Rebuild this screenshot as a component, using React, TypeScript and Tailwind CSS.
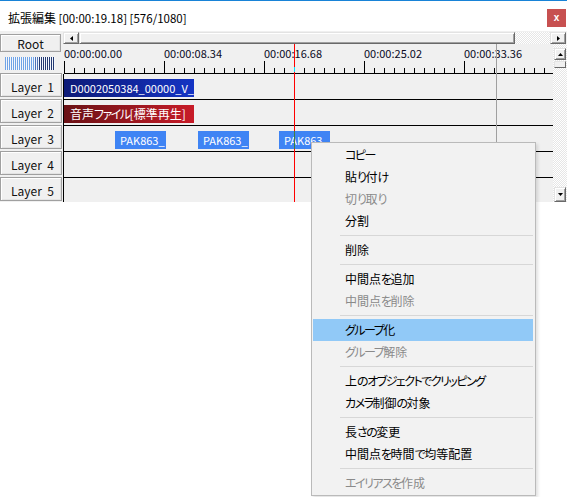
import React from "react";

type Item = { t?: string; d?: boolean; h?: boolean; sep?: boolean };

const MENU: Item[] = [
  { t: "コピー" },
  { t: "貼り付け" },
  { t: "切り取り", d: true },
  { t: "分割" },
  { sep: true },
  { t: "削除" },
  { sep: true },
  { t: "中間点を追加" },
  { t: "中間点を削除", d: true },
  { sep: true },
  { t: "グループ化", h: true },
  { t: "グループ解除", d: true },
  { sep: true },
  { t: "上のオブジェクトでクリッピング" },
  { t: "カメラ制御の対象" },
  { sep: true },
  { t: "長さの変更" },
  { t: "中間点を時間で均等配置" },
  { sep: true },
  { t: "エイリアスを作成", d: true },
];

const LABELS = ["00:00:00.00", "00:00:08.34", "00:00:16.68", "00:00:25.02", "00:00:33.36"];

function Kana({ text }: { text: string }) {
  const parts = text.match(/[\u3040-\u30ff]+|[^\u3040-\u30ff]+/g) || [];
  return (
    <>
      {parts.map((p, i) =>
        /[\u3040-\u30ff]/.test(p) ? (
          <span key={i} className="tracking-[-1.5px]">
            {p}
          </span>
        ) : (
          <span key={i}>{p}</span>
        )
      )}
    </>
  );
}

function ArrowBtn({ dir, className }: { dir: "l" | "r" | "u" | "d"; className: string }) {
  return (
    <div
      className={
        "flex items-center justify-center bg-[#f0f0f0] border border-t-[#e3e3e3] border-l-[#e3e3e3] border-r-[#696969] border-b-[#696969] shadow-[inset_1px_1px_0_#ffffff,inset_-1px_-1px_0_#a0a0a0] " +
        className
      }
    >
      {dir === "l" && (
        <svg width="3" height="5" viewBox="0 0 3 5">
          <polygon points="3,0 3,5 0,2.5" fill="#000" />
        </svg>
      )}
      {dir === "r" && (
        <svg width="3" height="5" viewBox="0 0 3 5">
          <polygon points="0,0 0,5 3,2.5" fill="#000" />
        </svg>
      )}
      {dir === "u" && (
        <svg width="5" height="3" viewBox="0 0 5 3">
          <polygon points="0,3 5,3 2.5,0" fill="#000" />
        </svg>
      )}
      {dir === "d" && (
        <svg width="5" height="3" viewBox="0 0 5 3">
          <polygon points="0,0 5,0 2.5,3" fill="#000" />
        </svg>
      )}
    </div>
  );
}

export default function App() {
  const minor: number[] = [];
  for (let x = 0; x < 489; x += 10) minor.push(x);
  const stripes = Array.from({ length: 25 }, (_, i) => i);

  return (
    <div className="relative w-[567px] h-[497px] overflow-hidden bg-white text-black text-[12px] font-['Noto_Sans_CJK_JP','Noto_Sans',sans-serif] [font-feature-settings:'palt']">
      {/* window top border */}
      <div className="h-px bg-[#1883d7]" />

      {/* title bar */}
      <div className="h-[30px] flex items-center justify-between pl-[8px] pr-px pt-[4px]">
        <span className="leading-none whitespace-pre">
          拡張編集<span className="text-[11.5px]"> [00:00:19.18] [576/1080]</span>
        </span>
        <div className="w-[19px] h-[18px] bg-[#c75050] flex items-center justify-center text-white text-[10px] font-bold leading-none font-['Liberation_Sans',sans-serif]">
          x
        </div>
      </div>

      {/* main panel */}
      <div className="h-[171px] bg-[#f0f0f0] flex overflow-hidden">
        {/* left column */}
        <div className="w-[63px] shrink-0 flex flex-col pt-[3px]">
          <div className="w-[61px] h-[18px] shrink-0 flex items-center justify-center border border-[#a0a0a0] shadow-[inset_1px_1px_0_#ffffff,inset_-1px_-1px_0_#e3e3e3] leading-none text-[#111] pt-px">
            Root
          </div>
          <div className="ml-[5px] mt-[5px] h-[13px] shrink-0 flex">
            {stripes.map((i) => (
              <div key={i} className="w-[2px] h-full flex">
                <div
                  className={
                    "w-px h-full " +
                    (i < 15 ? "bg-[#6fa3e6]" : i < 17 ? "bg-[#4d72b8]" : "bg-[#243a72]")
                  }
                />
                <div className="w-px h-full bg-[#f4f7fc]" />
              </div>
            ))}
          </div>
          <div className="mt-[3px] flex flex-col gap-[2px] shrink-0">
            {[1, 2, 3, 4, 5].map((n) => (
              <div
                key={n}
                className="w-[62px] h-[24px] shrink-0 flex items-center justify-center border border-[#a0a0a0] shadow-[inset_1px_1px_0_#ffffff,inset_-1px_-1px_0_#e3e3e3] leading-none whitespace-pre text-[#111] pl-[3px] pt-[3px]"
              >
                {"Layer  " + n}
              </div>
            ))}
          </div>
        </div>

        {/* right part */}
        <div className="flex-1 flex flex-col min-w-0">
          {/* horizontal scrollbar */}
          <div className="mt-px h-[12px] shrink-0 flex">
            <ArrowBtn dir="l" className="w-[16px] h-full shrink-0" />
            <div className="w-[436px] h-full shrink-0 bg-[#f0f0f0] border border-t-[#e3e3e3] border-l-[#e3e3e3] border-r-[#696969] border-b-[#696969] shadow-[inset_1px_1px_0_#ffffff,inset_-1px_-1px_0_#a0a0a0]" />
            <div className="flex-1 h-full bg-[image:repeating-conic-gradient(#ffffff_0%_25%,#e6e6e6_0%_50%)] bg-[length:2px_2px]" />
            <ArrowBtn dir="r" className="w-[16px] h-full shrink-0" />
            <div className="w-px h-full" />
          </div>

          <div className="flex flex-1 min-h-0">
            {/* timeline */}
            <div className="relative w-[490px] shrink-0 flex flex-col overflow-hidden">
              {/* ruler */}
              <div className="h-[30px] shrink-0 pl-px flex flex-col overflow-hidden">
                <div className="mt-[2px] h-[14px] shrink-0 flex leading-[14px] text-[11px] text-[#0a0a1e]">
                  {LABELS.map((l) => (
                    <div key={l} className="w-[100px] shrink-0 whitespace-nowrap">
                      {l}
                    </div>
                  ))}
                </div>
                <svg width="489" height="14" viewBox="0 0 489 14" className="shrink-0 block">
                  <rect x="0" y="13" width="489" height="1" fill="#000" />
                  {minor.map((x) => (
                    <rect
                      key={x}
                      x={x}
                      y={x % 100 === 0 ? 1 : 8}
                      width="1"
                      height={x % 100 === 0 ? 12 : 5}
                      fill="#000"
                    />
                  ))}
                </svg>
              </div>

              {/* layer rows */}
              <div className="relative h-[26px] shrink-0 border-l border-b border-black">
                <div className="absolute left-0 top-[5px] w-[130px] h-[18px] bg-gradient-to-r from-[#0d1a78] to-[#1434c4] text-white text-[11px] leading-[18px] pl-[6px] overflow-hidden whitespace-nowrap">
                  D0002050384_00000_V_0000
                </div>
              </div>
              <div className="relative h-[26px] shrink-0 border-l border-b border-black">
                <div className="absolute left-0 top-[5px] w-[130px] h-[18px] bg-gradient-to-r from-[#6a1115] to-[#c81b28] text-white leading-[18px] pl-[6px] overflow-hidden whitespace-nowrap">
                  <Kana text="音声ファイル[標準再生]" />
                </div>
              </div>
              <div className="relative h-[26px] shrink-0 border-l border-b border-black">
                <div className="absolute left-[51px] top-[5px] w-[51px] h-[18px] bg-[#3f84f4] text-white text-[11px] leading-[18px] pl-[5px] overflow-hidden whitespace-nowrap">
                  PAK863_
                </div>
                <div className="absolute left-[134px] top-[5px] w-[51px] h-[18px] bg-[#3f84f4] text-white text-[11px] leading-[18px] pl-[5px] overflow-hidden whitespace-nowrap">
                  PAK863_
                </div>
                <div className="absolute left-[215px] top-[5px] w-[51px] h-[18px] bg-[#3f84f4] text-white text-[11px] leading-[18px] pl-[5px] overflow-hidden whitespace-nowrap">
                  PAK863_
                </div>
              </div>
              <div className="relative h-[26px] shrink-0 border-l border-b border-black" />
              <div className="relative h-[26px] shrink-0 border-l border-b border-black" />

              {/* scene end marker */}
              <div className="absolute left-[433px] top-0 bottom-0 w-px bg-[#a0a0a0]" />
              {/* current frame line */}
              <div className="absolute left-[231px] top-0 bottom-0 w-px bg-[#ff0000]" />
              <div className="absolute left-[231px] top-[23px] h-[5px] w-px bg-[#00e5ff]" />
              <div className="absolute left-[231px] top-[87px] h-[18px] w-px bg-[#3e7f3e]" />
            </div>

            {/* vertical scrollbar */}
            <div className="w-[14px] shrink-0 flex flex-col px-px bg-[image:repeating-conic-gradient(#ffffff_0%_25%,#e6e6e6_0%_50%)] bg-[length:2px_2px]">
              <ArrowBtn dir="u" className="mt-[4px] h-[12px] w-full shrink-0" />
              <div className="mt-px h-[7px] w-full shrink-0 bg-[#f0f0f0] border border-t-[#e3e3e3] border-l-[#e3e3e3] border-r-[#696969] border-b-[#696969]" />
              <div className="flex-1" />
              <ArrowBtn dir="d" className="h-[15px] w-full shrink-0" />
            </div>
          </div>
        </div>
      </div>

      {/* context menu */}
      <div className="absolute left-[311px] top-[142px] w-[225px] border border-[#bababa] bg-[#f2f2f2] pt-px pb-px pl-px pr-[2px] shadow-[2px_2px_3px_rgba(0,0,0,0.12)]">
        {MENU.map((m, i) =>
          m.sep ? (
            <div key={i} className="h-[7px] flex items-center pl-[27px]">
              <div className="h-px flex-1 bg-[#d7d7d7]" />
            </div>
          ) : (
            <div
              key={i}
              className={
                "h-[22px] flex items-center pl-[32px] leading-none whitespace-nowrap " +
                (m.h ? "bg-[#91c9f7] " : "") +
                (m.d ? "text-[#8a8a8a]" : "text-black")
              }
            >
              <Kana text={m.t || ""} />
            </div>
          )
        )}
      </div>
    </div>
  );
}
